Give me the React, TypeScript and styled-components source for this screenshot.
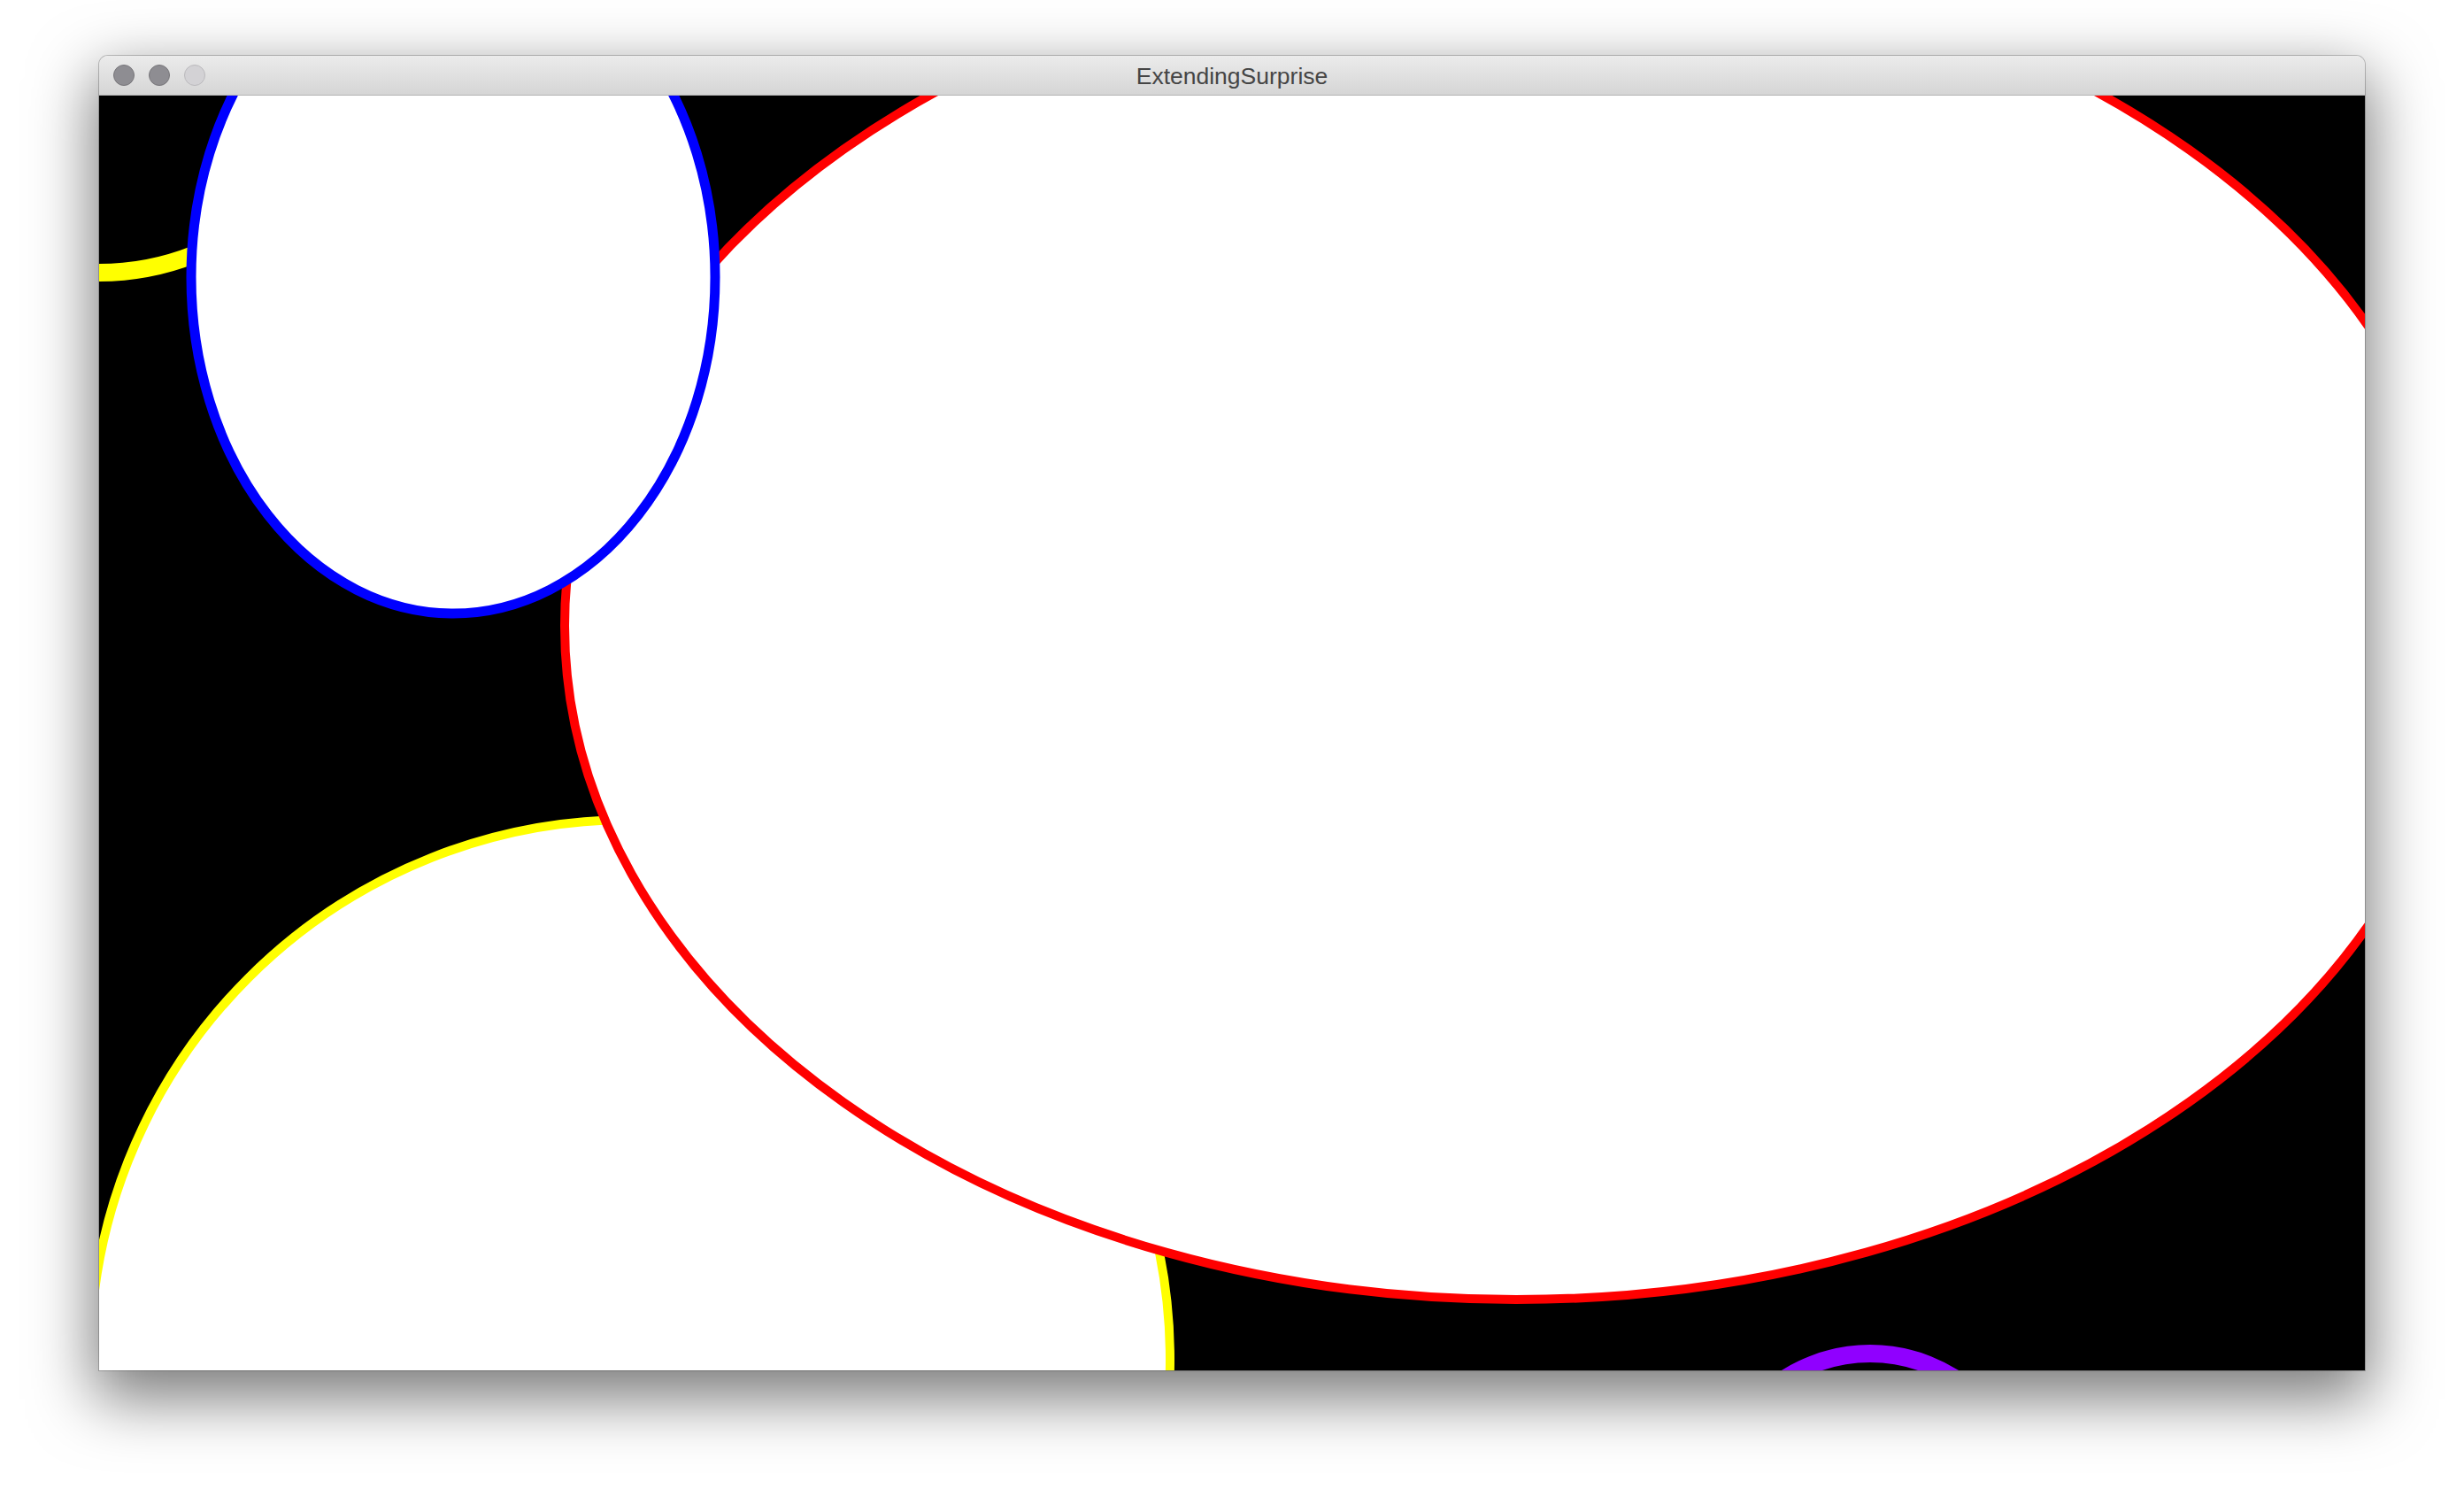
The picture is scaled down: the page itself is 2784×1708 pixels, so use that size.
import React from "react";
import styled, { createGlobalStyle } from "styled-components";

const GlobalStyle = createGlobalStyle`
  html, body {
    margin: 0;
    padding: 0;
    background: #ffffff;
  }
  body {
    font-family: "Liberation Sans", Arial, sans-serif;
  }
`;

const Page = styled.div`
  width: 2784px;
  height: 1708px;
  padding: 63px 0 0 112px;
  box-sizing: border-box;
  background: #ffffff;
  overflow: hidden;
`;

const Window = styled.div`
  display: flex;
  flex-direction: column;
  width: 2560px;
  border-radius: 10px 10px 0 0;
  box-shadow: 0 0 0 1px rgba(0, 0, 0, 0.22), 0 26px 70px 6px rgba(0, 0, 0, 0.52);
  overflow: hidden;
`;

const TitleBar = styled.div`
  position: relative;
  display: flex;
  align-items: center;
  height: 44px;
  padding: 0 16px;
  background: linear-gradient(#ebebeb, #d5d5d5);
  border-bottom: 1px solid #b3b3b3;
`;

const Lights = styled.div`
  display: flex;
  gap: 16px;
  z-index: 1;
`;

const Light = styled.span<{ $dim?: boolean }>`
  width: 24px;
  height: 24px;
  border-radius: 50%;
  box-sizing: border-box;
  background: ${(p) => (p.$dim ? "#d3d2d5" : "#8e8d92")};
  border: 1px solid ${(p) => (p.$dim ? "#bab9bc" : "#77767a")};
`;

const Title = styled.div`
  position: absolute;
  left: 0;
  right: 0;
  top: 0;
  bottom: 0;
  display: flex;
  align-items: center;
  justify-content: center;
  font-family: "Liberation Sans", Arial, sans-serif;
  font-size: 26.5px;
  color: #454545;
  padding-top: 2px;
`;

const Canvas = styled.svg`
  display: block;
  width: 2560px;
  height: 1440px;
  background: #000000;
`;

export default function App() {
  return (
    <>
      <GlobalStyle />
      <Page>
        <Window>
          <TitleBar>
            <Lights>
              <Light />
              <Light />
              <Light $dim />
            </Lights>
            <Title>ExtendingSurprise</Title>
          </TitleBar>
          <Canvas viewBox="0 0 2560 1440" xmlns="http://www.w3.org/2000/svg">
            <circle cx={600} cy={1428} r={610} fill="#ffffff" stroke="#ffff00" strokeWidth={10} />
            <ellipse cx={1601} cy={599} rx={1075} ry={761} fill="#ffffff" stroke="#ff0000" strokeWidth={10} />
            <circle cx={0} cy={-92} r={292} fill="none" stroke="#ffff00" strokeWidth={20} />
            <ellipse cx={400} cy={205} rx={296} ry={380} fill="#ffffff" stroke="#0000ff" strokeWidth={11} />
            <circle cx={2001} cy={1598} r={177} fill="none" stroke="#9000ff" strokeWidth={20} />
          </Canvas>
        </Window>
      </Page>
    </>
  );
}
